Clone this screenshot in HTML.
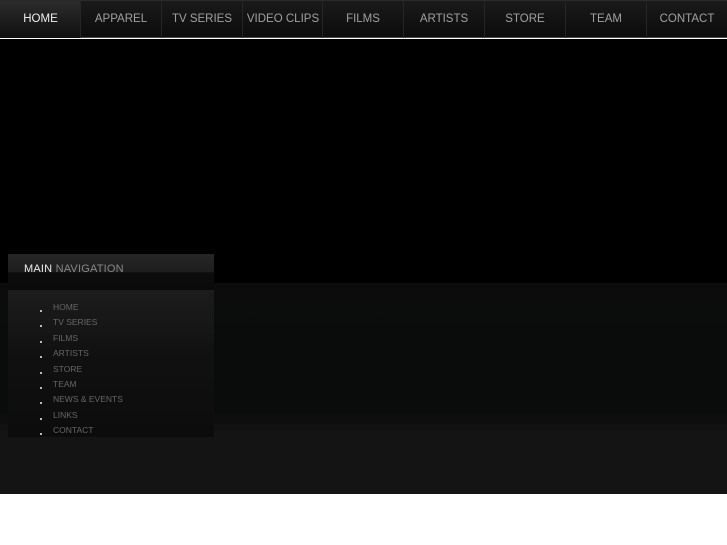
<!DOCTYPE html>
<html><head><meta charset="utf-8"><style>
*{margin:0;padding:0;box-sizing:border-box}
body{width:727px;height:545px;background:#fff;font-family:"Liberation Sans",sans-serif;position:relative;overflow:hidden}
#nav{position:absolute;left:0;top:0;width:727px;height:38px;background:linear-gradient(#1a1a1a,#0c0c0c);border-bottom:1px solid #4a4a4a;border-top:1px solid #2a2a2a}
#nav div{position:absolute;top:0;height:37px;width:81px;line-height:36px;text-align:center;color:#a0a0a0;font-size:11.5px;border-left:1px solid #262626}
#nav div.h{color:#eee;background:linear-gradient(#2c2c2c,#0f0f0f);border-left:none}
#black{position:absolute;top:39px;left:0;width:727px;height:244px;background:#000}
#band{position:absolute;top:283px;left:0;width:727px;height:211px;background:linear-gradient(#0c0c0c 0,#0a0b0b 60px,#0a0b0b 130px,#0e0e0e 131px,#0e0e0e 141px,#131313 142px,#101010 146px,#151515 150px,#141414 155px,#141414 211px)}
#side{position:absolute;left:8px;top:254px;width:206px}
#sh{height:36px;background:linear-gradient(#262626 0,#1e1e1e 50%,#0d0d0d 52%,#0a0a0a 100%);color:#888;font-size:11px;padding:9px 0 0 16px;letter-spacing:.2px}
#sh b{color:#eee;font-weight:normal}
#sl{height:147px;background:linear-gradient(#1c1c1c 0,#161616 40px,#111 60px,#0c0c0c 100%);padding-top:10px}
#sl div{height:15.4px;font-size:8.5px;color:#666;padding-left:45px;position:relative;line-height:15px}
#sl div:before{content:"";position:absolute;left:32px;top:10px;width:2px;height:2px;background:#bbb}
</style></head><body>
<div id="nav">
<div class="h" style="left:0">HOME</div>
<div style="left:80px">APPAREL</div>
<div style="left:161px">TV SERIES</div>
<div style="left:242px">VIDEO CLIPS</div>
<div style="left:322px">FILMS</div>
<div style="left:403px">ARTISTS</div>
<div style="left:484px">STORE</div>
<div style="left:565px">TEAM</div>
<div style="left:646px">CONTACT</div>
</div>
<div id="black"></div>
<div id="band"></div>
<div id="side">
<div id="sh"><b>MAIN</b> NAVIGATION</div>
<div id="sl">
<div>HOME</div><div>TV SERIES</div><div>FILMS</div><div>ARTISTS</div><div>STORE</div><div>TEAM</div><div>NEWS &amp; EVENTS</div><div>LINKS</div><div>CONTACT</div>
</div>
</div>
</body></html>
